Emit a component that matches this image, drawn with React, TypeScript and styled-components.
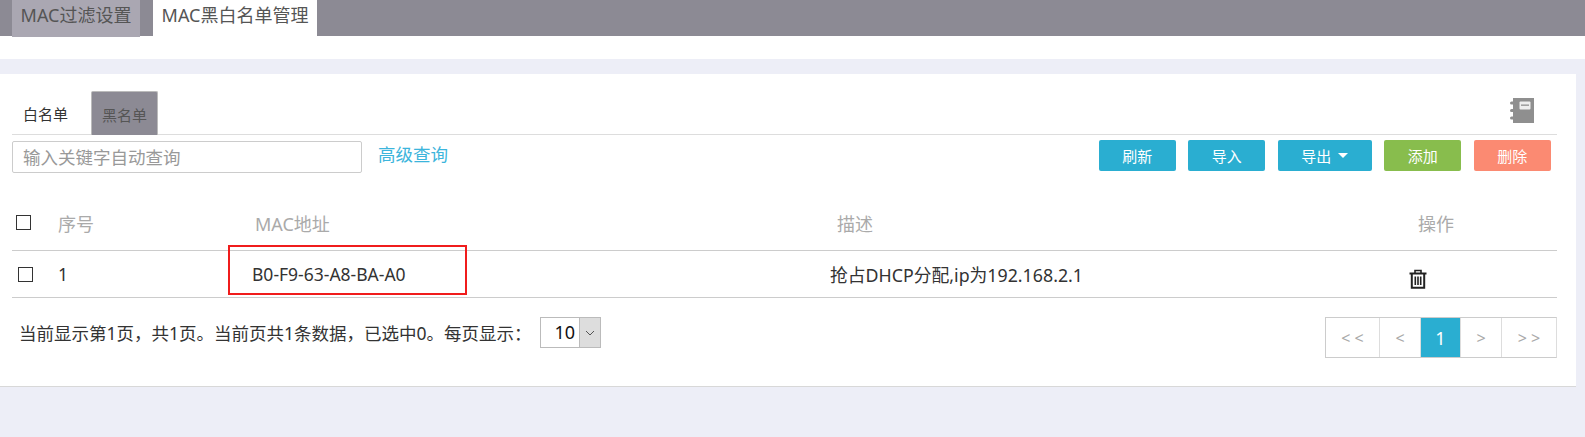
import React from "react";
import styled, { createGlobalStyle } from "styled-components";

const Global = createGlobalStyle`
  html, body { margin: 0; padding: 0; height: 437px; overflow: hidden; background: #edeef7; }
  body { font-family: "Noto Sans", "Noto Sans CJK SC", "Liberation Sans", sans-serif; }
  * { box-sizing: border-box; }
`;

const Page = styled.div`
  width: 1585px;
  height: 437px;
  display: flex;
  flex-direction: column;
`;
const TopSection = styled.div`
  height: 59px;
  background: #fff;
`;
const TopBar = styled.div`
  height: 36px;
  background: #8c8a94;
  display: flex;
  padding-left: 12px;
`;
const TopTab = styled.div<{ $active?: boolean; $w: number }>`
  width: ${(p) => p.$w}px;
  height: ${(p) => (p.$active ? 36 : 37)}px;
  margin-right: 13px;
  background: ${(p) => (p.$active ? "#fff" : "#aaa7b2")};
  color: #555;
  font-size: 18px;
  line-height: 30px;
  text-align: center;
  white-space: nowrap;
`;
const Card = styled.div`
  margin-top: 15px;
  width: 1576px;
  height: 313px;
  background: #fff;
  border-bottom: 1px solid #d8d8d8;
  padding: 17px 19px 0 12px;
`;
const SubTabs = styled.div`
  height: 44px;
  border-bottom: 1px solid #ddd;
  display: flex;
  align-items: flex-end;
  justify-content: space-between;
`;
const SubTabGroup = styled.div`
  display: flex;
  gap: 12px;
`;
const SubTab = styled.div<{ $active?: boolean }>`
  width: 67px;
  height: ${(p) => (p.$active ? 43 : 44)}px;
  margin-bottom: ${(p) => (p.$active ? 0 : -1)}px;
  font-size: 15px;
  line-height: 46px;
  text-align: center;
  color: ${(p) => (p.$active ? "#333" : "#555")};
  background: ${(p) => (p.$active ? "#fff" : "#8c8a94")};
  border: ${(p) => (p.$active ? "none" : "1px solid #bbb")};
  border-bottom: none;
  border-radius: 2px 2px 0 0;
`;
const BookIcon = styled.svg`
  width: 24px;
  height: 25px;
  margin: 0 23px 11px 0;
`;
const Toolbar = styled.div`
  display: flex;
  align-items: flex-start;
  padding-top: 6px;
`;
const Search = styled.input`
  width: 350px;
  height: 32px;
  border: 1px solid #ccc;
  border-radius: 2px;
  padding: 0 10px;
  font: inherit;
  font-size: 17.5px;
  outline: none;
  &::placeholder { color: #999; opacity: 1; }
`;
const Link = styled.a`
  margin-left: 16px;
  font-size: 17.5px;
  line-height: 26px;
  color: #3cb5dc;
  white-space: nowrap;
`;
const Buttons = styled.div`
  margin: -1px 6.25px 0 auto;
  display: flex;
  gap: 12.5px;
`;
const Button = styled.button<{ $bg: string; $w?: number }>`
  width: ${(p) => p.$w ?? 77}px;
  height: 31px;
  border: none;
  border-radius: 2px;
  padding: 0;
  background: ${(p) => p.$bg};
  color: #fff;
  font: inherit;
  font-size: 15px;
  display: flex;
  align-items: center;
  justify-content: center;
`;
const Caret = styled.span`
  display: inline-block;
  margin-left: 7px;
  border-left: 5px solid transparent;
  border-right: 5px solid transparent;
  border-top: 5px solid #fff;
`;
const Row = styled.div<{ $h: number; $top?: number }>`
  height: ${(p) => p.$h}px;
  padding-top: ${(p) => p.$top ?? 0}px;
  display: grid;
  grid-template-columns: 46px 192px 579px 571px 1fr;
  align-items: center;
  border-bottom: 1px solid #ccc;
  position: relative;
`;
const Cell = styled.div<{ $head?: boolean; $pad?: number; $size?: number }>`
  padding-left: ${(p) => p.$pad ?? 0}px;
  font-size: ${(p) => p.$size ?? (p.$head ? 18 : 17.5)}px;
  color: ${(p) => (p.$head ? "#aaa" : "#333")};
  white-space: nowrap;
`;
const Check = styled.span<{ $left: number }>`
  display: block;
  width: 15px;
  height: 15px;
  margin-left: ${(p) => p.$left}px;
  border: 1.5px solid #333;
`;
const RedBox = styled.div`
  position: absolute;
  left: 216px;
  top: -6px;
  width: 239px;
  height: 50px;
  border: 2px solid #f01c1c;
`;
const TrashIcon = styled.svg`
  display: block;
  width: 18px;
  height: 20px;
  margin: 10px 0 0 9px;
`;
const Footer = styled.div`
  display: flex;
  align-items: flex-start;
  justify-content: space-between;
  padding: 19px 0 0 7px;
`;
const Info = styled.div`
  display: flex;
  align-items: center;
  font-size: 17.5px;
  color: #333;
  height: 31px;
  white-space: nowrap;
`;
const SelectBox = styled.div`
  width: 61px;
  height: 31px;
  margin-left: 8px;
  border: 1px solid #bbb;
  display: flex;
`;
const SelectValue = styled.span`
  flex: 1;
  font-size: 18px;
  line-height: 29px;
  padding-left: 14px;
  color: #111;
`;
const SelectArrow = styled.span`
  width: 21px;
  background: #ddd;
  border-left: 1px solid #bbb;
  display: flex;
  align-items: center;
  justify-content: center;
`;
const Pager = styled.div`
  display: flex;
  height: 41px;
  border: 1px solid #ccc;
  border-right: 1px solid #ddd;
`;
const PageCell = styled.div<{ $w: number; $active?: boolean }>`
  width: ${(p) => p.$w}px;
  padding-left: ${(p) => (p.$active ? 0 : 4)}px;
  border-right: 1px solid #ddd;
  display: flex;
  align-items: center;
  justify-content: center;
  font-size: ${(p) => (p.$active ? 18 : 16)}px;
  letter-spacing: ${(p) => (p.$active ? 0 : 4)}px;
  color: ${(p) => (p.$active ? "#fff" : "#aaa")};
  background: ${(p) => (p.$active ? "#2aaed1" : "#fff")};
  &:last-child { border-right: none; }
`;

export default function App() {
  return (
    <Page>
      <Global />
      <TopSection>
        <TopBar>
          <TopTab $w={128}>MAC过滤设置</TopTab>
          <TopTab $w={164} $active>MAC黑白名单管理</TopTab>
        </TopBar>
      </TopSection>
      <Card>
        <SubTabs>
          <SubTabGroup>
            <SubTab $active>白名单</SubTab>
            <SubTab>黑名单</SubTab>
          </SubTabGroup>
          <BookIcon viewBox="0 0 24 25">
            <rect x="3" y="0" width="21" height="25" fill="#8f8f8f" />
            <rect x="0" y="3.5" width="6" height="3" rx="1.5" fill="#8f8f8f" />
            <rect x="0" y="11" width="6" height="3" rx="1.5" fill="#8f8f8f" />
            <rect x="0" y="18.5" width="6" height="3" rx="1.5" fill="#8f8f8f" />
            <rect x="9.5" y="3.5" width="11" height="8" rx="1" fill="#eee" />
            <rect x="11" y="6.5" width="8" height="1.3" fill="#8f8f8f" />
          </BookIcon>
        </SubTabs>
        <Toolbar>
          <Search placeholder="输入关键字自动查询" />
          <Link>高级查询</Link>
          <Buttons>
            <Button $bg="#2aaed1">刷新</Button>
            <Button $bg="#2aaed1">导入</Button>
            <Button $bg="#2aaed1" $w={94}>导出<Caret /></Button>
            <Button $bg="#88bd4d">添加</Button>
            <Button $bg="#fb8a72">删除</Button>
          </Buttons>
        </Toolbar>
        <Row $h={78} $top={22}>
          <Check $left={4} />
          <Cell $head>序号</Cell>
          <Cell $head $pad={5}>MAC地址</Cell>
          <Cell $head $pad={8}>描述</Cell>
          <Cell $head $pad={18}>操作</Cell>
        </Row>
        <Row $h={47}>
          <Check $left={6} />
          <Cell>1</Cell>
          <Cell $pad={2}>B0-F9-63-A8-BA-A0</Cell>
          <Cell $size={17.8} $pad={1}>抢占DHCP分配,ip为192.168.2.1</Cell>
          <Cell>
            <TrashIcon viewBox="0 0 18 20" fill="none" stroke="#222">
              <path d="M0.5 4.5H17.5" strokeWidth="2" />
              <path d="M6 4V1.5H12V4" strokeWidth="1.6" />
              <path d="M2.8 4.5V18.8H15.2V4.5" strokeWidth="2" />
              <path d="M6.3 7.5V16M9 7.5V16M11.7 7.5V16" strokeWidth="1.6" />
            </TrashIcon>
          </Cell>
          <RedBox />
        </Row>
        <Footer>
          <Info>
            当前显示第1页，共1页。当前页共1条数据，已选中0。每页显示：
            <SelectBox>
              <SelectValue>10</SelectValue>
              <SelectArrow>
                <svg width="10" height="6" viewBox="0 0 10 6" fill="none" stroke="#555">
                  <path d="M1 1L5 5L9 1" />
                </svg>
              </SelectArrow>
            </SelectBox>
          </Info>
          <Pager>
            <PageCell $w={54}>&lt;&lt;</PageCell>
            <PageCell $w={41}>&lt;</PageCell>
            <PageCell $w={40} $active>1</PageCell>
            <PageCell $w={41}>&gt;</PageCell>
            <PageCell $w={54}>&gt;&gt;</PageCell>
          </Pager>
        </Footer>
      </Card>
    </Page>
  );
}
